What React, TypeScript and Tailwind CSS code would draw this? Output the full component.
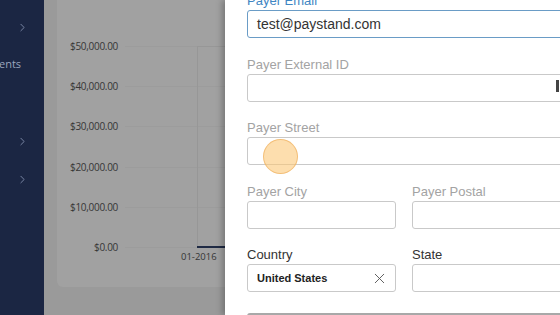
import { ChevronRight, X } from 'lucide-react'

const yLabels = ['$50,000.00', '$40,000.00', '$30,000.00', '$20,000.00', '$10,000.00', '$0.00']

function Field({ label, value, active, tone = 'muted', className = '' }: { label: string; value?: string; active?: boolean; tone?: 'muted' | 'dark' | 'blue'; className?: string }) {
  const labelColor = tone === 'blue' ? 'text-[#3f86c3]' : tone === 'dark' ? 'text-[#333]' : 'text-[#a3a3a3]'
  return (
    <div className={`flex flex-col ${className}`}>
      <label className={`text-[13px] leading-[16px] ${labelColor}`}>{label}</label>
      <div
        className={`mt-[1px] h-[28px] rounded-[3px] border bg-white flex items-center px-[9px] ${
          active ? 'border-[#6a9cc6]' : 'border-[#c9c9c9]'
        }`}
      >
        {value && <span className="text-[14px] text-[#333]">{value}</span>}
      </div>
    </div>
  )
}

export default function App() {
  return (
    <div className="w-[560px] h-[315px] overflow-hidden flex font-['Liberation_Sans',Arial,sans-serif] relative">
      {/* Sidebar */}
      <aside className="w-[44px] shrink-0 bg-[#1b2643] flex flex-col text-[#8592b0] overflow-hidden">
        <div className="h-[17px]" />
        <div className="h-[20px] flex items-center justify-center">
          <ChevronRight size={13} strokeWidth={1.6} />
        </div>
        <div className="h-[17px]" />
        <div className="h-[20px] text-[11px] leading-[20px] font-['Open_Sans',sans-serif] -ml-[1px] whitespace-nowrap text-[#9aa5bd]">
          ents
        </div>
        <div className="h-[57px]" />
        <div className="h-[20px] flex items-center justify-center">
          <ChevronRight size={13} strokeWidth={1.6} />
        </div>
        <div className="h-[18px]" />
        <div className="h-[20px] flex items-center justify-center">
          <ChevronRight size={13} strokeWidth={1.6} />
        </div>
      </aside>

      {/* Dimmed main area */}
      <main className="w-[181px] shrink-0 bg-[#9a9a9a] pl-[13px] pb-[28px] flex flex-col font-['Open_Sans',sans-serif]">
        <div className="flex-1 bg-[#a1a1a1] rounded-bl-[6px] relative">
          <div className="absolute left-0 right-0 top-[40px] flex flex-col gap-[28.4px]">
            {yLabels.map((l) => (
              <div key={l} className="flex items-center h-[12px]">
                <span className="w-[61px] text-right text-[10px] text-[#363636] tracking-[-0.3px]">{l}</span>
                <div className="ml-[7px] flex-1 h-px bg-[#9c9c9c]" />
              </div>
            ))}
          </div>
          <div className="absolute left-[140px] top-[46px] w-px h-[201px] bg-[#979797]" />
          <div className="absolute left-[140px] top-[46px] right-0 h-px bg-[#979797]" />
          <div className="absolute left-[140px] top-[246px] right-0 h-[2px] bg-[#1f2a44]" />
          <span className="absolute left-[124px] top-[250px] text-[9.5px] text-[#363636]">01-2016</span>
        </div>
      </main>

      {/* Modal */}
      <section className="flex-1 bg-white shadow-[-3px_0_6px_rgba(0,0,0,0.25)] pl-[22px] -mr-[40px] relative">
        <div className="flex flex-col gap-[18.5px] mt-[-7px]">
          <Field label="Payer Email" value="test@paystand.com" active tone="blue" />
          <Field label="Payer External ID" />
          <Field label="Payer Street" />
          <div className="flex gap-[16px]">
            <Field label="Payer City" className="w-[149px]" />
            <Field label="Payer Postal" className="flex-1" />
          </div>
          <div className="flex gap-[16px]">
            <div className="w-[149px] flex flex-col">
              <label className="text-[13px] leading-[16px] text-[#333]">Country</label>
              <div className="mt-[1px] h-[28px] rounded-[3px] border border-[#c9c9c9] bg-white flex items-center justify-between pl-[9px] pr-[7px]">
                <span className="text-[11px] font-bold text-[#222]">United States</span>
                <X size={17} strokeWidth={1.3} className="text-[#555]" />
              </div>
            </div>
            <Field label="State" tone="dark" className="flex-1" />
          </div>
          <div className="h-[6px] mt-[2px] rounded-t-[3px] border-t-[2px] border-[#a8a8a8] bg-white" />
        </div>
        <div className="absolute left-[331px] top-[80px] w-[3px] h-[12px] bg-[#444]" />
      </section>

      {/* Click indicator */}
      <div className="absolute left-[263px] top-[139px] w-[35px] h-[35px] rounded-full bg-[#fcc878]/60 border border-[#f0b060]/70" />
    </div>
  )
}
